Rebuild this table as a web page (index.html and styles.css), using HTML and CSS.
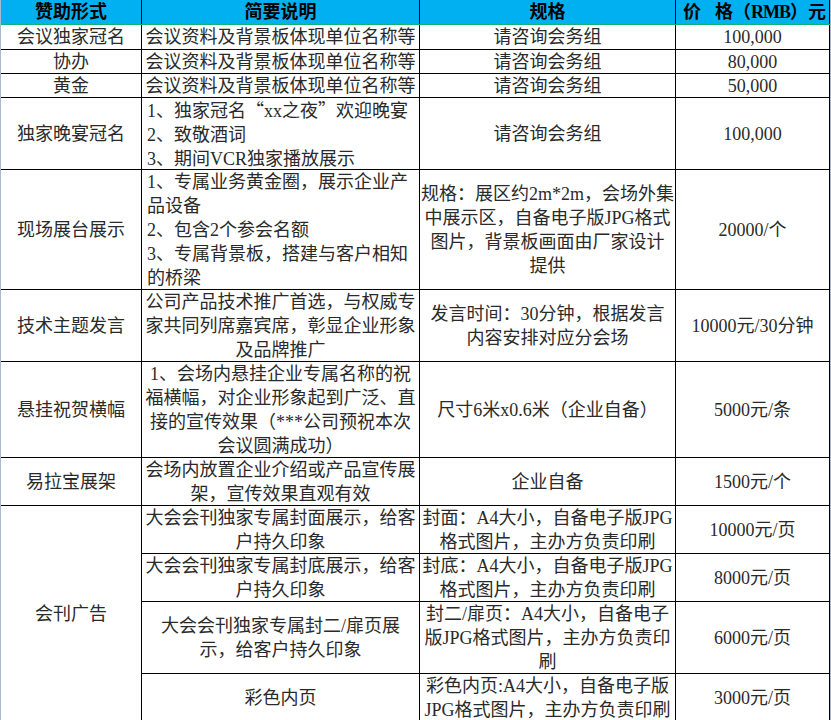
FILE: index.html
```html
<!DOCTYPE html>
<html lang="zh-CN">
<head>
<meta charset="utf-8">
<title>赞助形式</title>
<link rel="stylesheet" href="styles.css">
</head>
<body>
<div class="sheet">
  <div class="grid head">
    <div class="cell hc">赞助形式</div>
    <div class="cell hc">简要说明</div>
    <div class="cell hc">规格</div>
    <div class="cell hc price-h"><span class="gap">价</span>格（<span class="rmb">RMB</span>）元</div>
  </div>
  <div class="grid body">
    <div class="cell">会议独家冠名</div>
    <div class="cell">会议资料及背景板体现单位名称等</div>
    <div class="cell">请咨询会务组</div>
    <div class="cell">100,000</div>

    <div class="cell">协办</div>
    <div class="cell">会议资料及背景板体现单位名称等</div>
    <div class="cell">请咨询会务组</div>
    <div class="cell">80,000</div>

    <div class="cell">黄金</div>
    <div class="cell">会议资料及背景板体现单位名称等</div>
    <div class="cell">请咨询会务组</div>
    <div class="cell">50,000</div>

    <div class="cell">独家晚宴冠名</div>
    <div class="cell left"><p>1、独家冠名<span class="cj">“</span>xx之夜<span class="cj">”</span>欢迎晚宴<br>2、致敬酒词<br>3、期间VCR独家播放展示</p></div>
    <div class="cell">请咨询会务组</div>
    <div class="cell">100,000</div>

    <div class="cell">现场展台展示</div>
    <div class="cell left"><p>1、专属业务黄金圈，展示企业产<br>品设备<br>2、包含2个参会名额<br>3、专属背景板，搭建与客户相知<br>的桥梁</p></div>
    <div class="cell"><p>规格：展区约2m*2m，会场外集<br>中展示区，自备电子版JPG格式<br>图片，背景板画面由厂家设计<br>提供</p></div>
    <div class="cell">20000/个</div>

    <div class="cell">技术主题发言</div>
    <div class="cell"><p>公司产品技术推广首选，与权威专<br>家共同列席嘉宾席，彰显企业形象<br>及品牌推广</p></div>
    <div class="cell"><p>发言时间：30分钟，根据发言<br>内容安排对应分会场</p></div>
    <div class="cell">10000元/30分钟</div>

    <div class="cell">悬挂祝贺横幅</div>
    <div class="cell"><p>1、会场内悬挂企业专属名称的祝<br>福横幅，对企业形象起到广泛、直<br>接的宣传效果（***公司预祝本次<br>会议圆满成功）</p></div>
    <div class="cell">尺寸6米x0.6米（企业自备）</div>
    <div class="cell">5000元/条</div>

    <div class="cell">易拉宝展架</div>
    <div class="cell"><p>会场内放置企业介绍或产品宣传展<br>架，宣传效果直观有效</p></div>
    <div class="cell">企业自备</div>
    <div class="cell">1500元/个</div>

    <div class="cell span4">会刊广告</div>
    <div class="cell"><p>大会会刊独家专属封面展示，给客<br>户持久印象</p></div>
    <div class="cell"><p>封面：A4大小，自备电子版JPG<br>格式图片，主办方负责印刷</p></div>
    <div class="cell">10000元/页</div>

    <div class="cell"><p>大会会刊独家专属封底展示，给客<br>户持久印象</p></div>
    <div class="cell"><p>封底：A4大小，自备电子版JPG<br>格式图片，主办方负责印刷</p></div>
    <div class="cell">8000元/页</div>

    <div class="cell"><p>大会会刊独家专属封二/扉页展<br>示，给客户持久印象</p></div>
    <div class="cell"><p>封二/扉页：A4大小，自备电子<br>版JPG格式图片，主办方负责印<br>刷</p></div>
    <div class="cell">6000元/页</div>

    <div class="cell">彩色内页</div>
    <div class="cell"><p>彩色内页:A4大小，自备电子版<br>JPG格式图片，主办方负责印刷</p></div>
    <div class="cell">3000元/页</div>
  </div>
</div>
</body>
</html>
```

FILE: styles.css
```css
html, body {
  margin: 0;
  padding: 0;
  overflow: hidden;
  background: #ffffff;
}

.sheet {
  width: 829px;
  border-left: 1px solid #a9b7cf;
  border-right: 1px solid #a9b7cf;
  font-family: "Liberation Serif", "Noto Sans CJK SC", serif;
  font-size: 18px;
  line-height: 24px;
  color: #2a2a2a;
}

.grid {
  display: grid;
  grid-template-columns: 140px 277px 255px 153px;
  gap: 1px;
  padding-right: 1px;
  background: #000000;
}

.head {
  grid-template-rows: 24px;
  border-bottom: 1px solid #10b46a;
}

.body {
  grid-template-rows: 24px 23px 23px 71px 119px 71px 95px 47px 47px 47px 71px 48px;
}

.cell {
  background: #ffffff;
  display: flex;
  align-items: center;
  justify-content: center;
  text-align: center;
  white-space: nowrap;
  overflow: visible;
}

.cell p {
  margin: 0;
}

.hc {
  background: #00b0f0;
  color: #000000;
  font-weight: bold;
}

.price-h {
  justify-content: flex-start;
  padding-left: 7px;
}

.price-h .gap {
  margin-right: 14px;
}

.rmb {
  letter-spacing: -1px;
}

.left {
  justify-content: flex-start;
  text-align: left;
  padding-left: 5px;
}

.cj {
  font-family: "Noto Sans CJK SC", sans-serif;
}

.span4 {
  grid-row: span 4;
}
```
